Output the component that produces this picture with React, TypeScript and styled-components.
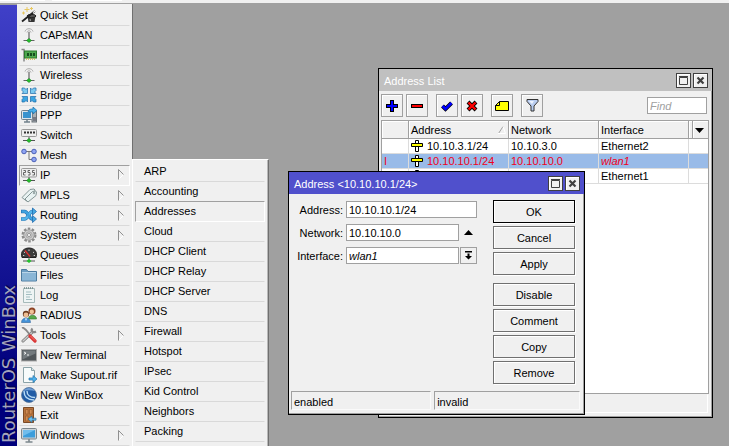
import React from "react";
import styled, { createGlobalStyle } from "styled-components";

const GlobalStyle = createGlobalStyle`
  *, *::before, *::after { box-sizing: border-box; }
  body {
    margin: 0;
    overflow: hidden;
    font: 11px/14px "Liberation Sans", Arial, sans-serif;
    color: #000;
  }
  button, input { font: inherit; color: inherit; border-radius: 0; margin: 0; }
`;

const Screen = styled.div`
  position: relative;
  display: flex;
  flex-direction: column;
  height: 100vh;
  overflow: hidden;
  background: #a0a0a0;
`;

const TopStrip = styled.div`
  flex: none;
  display: flex;
  height: 4px;
  background: #f0f0f0;
  border-bottom: 1px solid #a0a0a0;
`;

const StripSegment = styled.div<{ $w: number; $gap: number }>`
  width: ${p => p.$w}px;
  height: 1px;
  margin-right: ${p => p.$gap}px;
  background: #fff;
`;

const Workspace = styled.div`
  flex: 1;
  display: flex;
  align-items: stretch;
  min-height: 0;
`;

const Brand = styled.div`
  flex: none;
  width: 17px;
  display: flex;
  align-items: center;
  writing-mode: vertical-rl;
  transform: rotate(180deg);
  margin-top: 1px;
  padding-top: 3px;
  background: linear-gradient(to top, #4040c8, #00007c 85%);
  color: #a3a3bd;
  font: 18px/17px "DejaVu Sans", sans-serif;
  white-space: nowrap;
  text-shadow: 1px 1px 1px #000040;
`;

const MainMenu = styled.nav`
  flex: none;
  width: 116px;
  padding: 2px 2px 0 2px;
  background: #f0f0f0;
  border-right: 1px solid #707070;
  overflow: hidden;
`;

const SubMenu = styled.nav`
  position: absolute;
  left: 132px;
  top: 159px;
  bottom: 0;
  width: 137px;
  padding: 2px 3px 0 2px;
  background: #f0f0f0;
  border: 1px solid #fff;
  border-right: 1px solid #707070;
  border-bottom: 0;
  box-shadow: inset -1px 0 #b8b8b8;
`;

const MenuItem = styled.button<{ $active?: boolean; $plain?: boolean }>`
  display: flex;
  align-items: center;
  gap: 3px;
  width: 100%;
  height: ${p => (p.$active ? 21 : 20)}px;
  margin-top: ${p => (p.$active ? -1 : 0)}px;
  padding: 0 4px 2px ${p => (p.$plain ? 8 : 1)}px;
  text-align: left;
  white-space: nowrap;
  background: none;
  border: 1px solid transparent;
  border-bottom-color: #d9d9d9;
  ${p => p.$active && "border-color: #a0a0a0 #fff #fff #a0a0a0;"}
`;

const ItemText = styled.span`
  flex: 1;
`;

const Window = styled.section<{ $x: number; $y: number; $w: number; $h: number }>`
  position: absolute;
  left: ${p => p.$x}px;
  top: ${p => p.$y}px;
  width: ${p => p.$w}px;
  height: ${p => p.$h}px;
  display: flex;
  flex-direction: column;
  background: #f0f0f0;
  border: 1px solid #000;
  box-shadow: inset -1px -1px #a0a0a0;
`;

const TitleBar = styled.header<{ $active?: boolean }>`
  flex: none;
  display: flex;
  align-items: center;
  gap: 2px;
  height: 22px;
  padding: 0 4px 0 5px;
  color: #fff;
  background: ${p => (p.$active ? "#5050cc" : "#c0c0c0")};
`;

const Title = styled.h2`
  flex: 1;
  margin: 0;
  padding-top: 2px;
  font: inherit;
`;

const FrameButton = styled.button`
  display: grid;
  place-items: center;
  width: 15px;
  height: 15px;
  padding: 0;
  background: #f0f0f0;
  border: 1px solid #404040;
  box-shadow: inset 1px 1px #fff;
`;

const Toolbar = styled.div`
  display: flex;
  align-items: center;
  gap: 8px;
  padding: 3px 5px 3px 2px;
`;

const ToolGroup = styled.div`
  display: flex;
  gap: 3px;
`;

const ToolButton = styled.button`
  display: grid;
  place-items: center;
  width: 22px;
  height: 23px;
  padding: 0;
  background: #f0f0f0;
  border: 1px solid #a0a0a0;
  box-shadow: inset 1px 1px #fff;
`;

const TextInput = styled.input`
  flex: 1;
  min-width: 0;
  height: 17px;
  padding: 0 2px;
  background: #fff;
  border: 1px solid #a0a0a0;
  outline: none;
`;

const FindInput = styled(TextInput)`
  flex: none;
  width: 60px;
  margin-left: auto;
  font-style: italic;
  &::placeholder { color: #a0a0a0; opacity: 1; }
`;

const ItalicInput = styled(TextInput)`
  font-style: italic;
`;

const ListPane = styled.div`
  flex: 1;
  min-height: 0;
  margin: 0 3px 0 2px;
  overflow: hidden;
  background: #fff;
  border: 1px solid #a0a0a0;
`;

const Table = styled.table`
  width: 100%;
  table-layout: fixed;
  border-collapse: separate;
  border-spacing: 0;
`;

const Col = styled.col<{ $w?: number }>`
  width: ${p => (p.$w ? p.$w + "px" : "auto")};
`;

const HeadCell = styled.th`
  height: 18px;
  padding: 1px 2px 0;
  font-weight: normal;
  text-align: left;
  background: #f0f0f0;
  border-right: 1px solid #a0a0a0;
  border-bottom: 1px solid #a0a0a0;
  box-shadow: inset 1px 1px #fff;
  &:last-child { border-right: 0; }
`;

const HeadInner = styled.div`
  display: flex;
  align-items: center;
  justify-content: space-between;
`;

const Row = styled.tr<{ $selected?: boolean }>`
  background: ${p => (p.$selected ? "#99bbe8" : "#fff")};
  color: ${p => (p.$selected ? "#f00020" : "#000")};
`;

const Cell = styled.td`
  height: 15px;
  padding: 0 2px;
  line-height: 14px;
  white-space: nowrap;
  overflow: hidden;
  border-right: 1px solid #dcdcdc;
  border-bottom: 1px solid #dcdcdc;
  &:last-child { border-right: 0; }
`;

const CellInner = styled.div`
  display: flex;
  align-items: center;
  gap: 4px;
  height: 14px;
`;

const StatusBar = styled.footer`
  flex: none;
  display: flex;
  gap: 3px;
  height: 23px;
  padding: 0 4px 4px 2px;
`;

const StatusCell = styled.div<{ $grow: number }>`
  flex: ${p => p.$grow} 1 0;
  padding: 3px 2px 0;
  border: 1px solid;
  border-color: #a0a0a0 #fafafa #fafafa #a0a0a0;
`;

const PlainStatus = styled.div`
  flex: 1;
  border: 1px solid;
  border-color: transparent #fff #fff transparent;
`;

const DialogBody = styled.form`
  flex: 1;
  display: flex;
  gap: 16px;
  padding: 6px 9px 0 5px;
`;

const Fields = styled.div`
  flex: 1;
  min-width: 0;
  display: flex;
  flex-direction: column;
  gap: 6px;
  padding-top: 1px;
`;

const Field = styled.div`
  display: flex;
  align-items: center;
  height: 17px;
`;

const Label = styled.label`
  flex: none;
  width: 49px;
  margin-right: 3px;
  text-align: right;
`;

const DropButton = styled.button`
  flex: none;
  display: grid;
  place-items: center;
  width: 17px;
  height: 17px;
  margin-left: 1px;
  padding: 0;
  background: #f0f0f0;
  border: 1px solid #a0a0a0;
`;

const ArrowButton = styled(DropButton)`
  background: none;
  border: 0;
`;

const Actions = styled.div`
  flex: none;
  display: flex;
  flex-direction: column;
  gap: 3px;
  width: 82px;
`;

const ActionGroup = styled.div`
  display: flex;
  flex-direction: column;
  gap: 3px;
  & + & { margin-top: 5px; }
`;

const ActionButton = styled.button<{ $primary?: boolean }>`
  height: 23px;
  padding: 1px 0 0;
  background: #f0f0f0;
  border: 1px solid ${p => (p.$primary ? "#000" : "#707070")};
  box-shadow: inset 1px 1px #fff, 1px 1px #fff;
`;

const Svg = styled.svg`
  display: block;
  flex: none;
`;

const Icon = ({ children, size = 16 }: { children: React.ReactNode; size?: number }) => (
  <Svg width={size} height={size} viewBox={`0 0 ${size} ${size}`} aria-hidden="true">
    {children}
  </Svg>
);

const antenna = (
  <>
    <path d="M4 4.500C5 .8 11 .8 12 4.500M6 5.500C6.500 3.300 9.500 3.300 10 5.500" fill="none" stroke="#aaa" />
    <path d="M8 5v7" stroke="#888" strokeWidth="1.600" />
    <path d="M2.500 13.500h11" stroke="#666" />
    <path d="M8 11.500l2.500 2-2.500 2-2.500-2z" fill="#22c32a" stroke="#16791b" strokeWidth=".6" />
  </>
);

const port = (
  <>
    <path d="M8 10v3M2 13.500h12" stroke="#555" />
    <path d="M8 11.500l2.500 2-2.500 2-2.500-2z" fill="#22c32a" stroke="#16791b" strokeWidth=".6" />
  </>
);

const icons: Record<string, React.ReactNode> = {
  wand: (
    <>
      <path d="M6.500 9h8l-1 6h-6z" fill="#333" />
      <ellipse cx="10.500" cy="9" rx="4.500" ry="1.600" fill="#555" stroke="#222" />
      <path d="M1 14.500l13-10.500" stroke="#222" strokeWidth="1.800" />
      <path d="M12 5.600L14.300 3.700" stroke="#fff" strokeWidth="1.200" />
      <path d="M9 12l.5 2" stroke="#999" strokeWidth="1.300" />
      <path d="M6 0v5M3.500 2.500h5M2.500 4.500v3M1 6h3M10.500 0v3M9 1.500h3" stroke="#e8c860" />
    </>
  ),
  antenna,
  card: (
    <>
      <path d="M.5 2.500h2.500v12" fill="none" stroke="#888" strokeWidth="1.500" />
      <rect x="3.500" y="4" width="12" height="7" fill="#4fa84f" stroke="#2c7a2c" />
      <path d="M6 6h2v3H6zM9 6h2v3H9zM12 6h2v3h-2z" fill="#174d1d" />
      <path d="M5 12h9" stroke="#c8b343" strokeWidth="1.500" strokeDasharray="1 1" />
    </>
  ),
  bridge: (
    <g fill="#39a5e2" stroke="#1e6aa8" strokeWidth=".7">
      <path d="M1 1h2.500l1.500 1.500 1.500-1.500v5.500H1l1.500-1.500L1 3.500z" fill="#7ac9f0" />
      <path d="M15 1h-2.500L11 2.500 9.500 1v5.500H15l-1.500-1.500L15 3.500z" fill="#7ac9f0" />
      <path d="M1 15h2.500L5 13.500 6.500 15V9.500H1L2.500 11 1 12.500z" />
      <path d="M15 15h-2.500L11 13.500 9.500 15V9.500H15L13.500 11l1.500 1.500z" />
    </g>
  ),
  ppp: (
    <>
      <rect x="11" y="4" width="4.500" height="11" fill="#aab0b5" stroke="#6b7278" />
      <path d="M12 11h3M12 13h3" stroke="#445" />
      <rect x=".5" y="3.500" width="11" height="9" rx="1" fill="#dde5ea" stroke="#71818c" />
      <path d="M2 5h8v6H2z" fill="#3993ce" />
      <path d="M3 15h6M6 12v3" stroke="#71818c" strokeWidth="1.500" />
      <path d="M7 4.500C8 2 10 2 12 2V0l4 3.500L12 7V5C10 5 9 5 7 4.500z" fill="#48b0ea" stroke="#176dab" strokeWidth=".7" />
    </>
  ),
  switch: (
    <>
      <rect x=".5" y="2.500" width="15" height="7" rx="1" fill="#eee" stroke="#999" />
      <path d="M3 5.500h11" stroke="#333" strokeWidth="2" strokeDasharray="2 1" />
      {port}
    </>
  ),
  mesh: (
    <>
      <path d="M5 4.500h6M8 4.500v8h3" fill="none" stroke="#777" />
      <g fill="#8ea3f2" stroke="#3f56b0" strokeWidth=".9">
        <circle cx="3" cy="4.500" r="2.300" />
        <circle cx="13" cy="4.500" r="2.300" />
        <circle cx="13" cy="12.500" r="2.300" />
      </g>
    </>
  ),
  ip: (
    <>
      <rect x=".5" y="1.500" width="15" height="8.500" rx="1" fill="#eee" stroke="#999" />
      <path d="M2.500 3.500h2v2h-2v2.500h2M9 3.500H7v2h2v2.500H7M13.500 3.500h-2v2h2v2.500h-2" fill="none" stroke="#555" strokeWidth=".9" />
      {port}
    </>
  ),
  tag: (
    <g fill="#e9f2f2" stroke="#7a8c8c" strokeWidth=".9">
      <path d="M1 10.500L9 2.500l4-.5 1 1-1 4-7.500 7z" />
      <path d="M4 12L11.500 4.500l3-.5 1 1-.5 3.500L7 15z" />
      <circle cx="13" cy="6" r=".8" fill="#fff" />
    </g>
  ),
  routing: (
    <>
      <path d="M0 4.500h3.500c4 0 4 7.500 8 7.500h1" fill="none" stroke="#1f6bae" strokeWidth="3.600" />
      <path d="M0 12h3.500c4 0 4-7.500 8-7.500h1" fill="none" stroke="#2479b9" strokeWidth="3.600" />
      <path d="M.5 12h3c4 0 4-7.500 8-7.500h1" fill="none" stroke="#55b5ea" strokeWidth="2.400" />
      <path d="M.5 4.500h3c4 0 4 7.500 8 7.500h1" fill="none" stroke="#3fa2de" strokeWidth="2.400" />
      <path d="M11.500 1l4 3.500-4 3.500zM11.500 8.500l4 3.500-4 3.500z" fill="#46a9e2" stroke="#1f6bae" strokeWidth=".8" />
    </>
  ),
  gear: (
    <>
      <circle cx="8" cy="8" r="6" fill="none" stroke="#8b8b8b" strokeWidth="3" strokeDasharray="2.400 1.370" />
      <circle cx="8" cy="8" r="5.200" fill="#cfcfcf" stroke="#9d9d9d" />
      <circle cx="8" cy="8" r="3.200" fill="none" stroke="#a9a9a9" />
      <circle cx="8" cy="8" r="1.600" fill="#f4f4f4" stroke="#888" strokeWidth=".8" />
    </>
  ),
  gauge: (
    <>
      <path d="M1 10.500C-1 4 3.500 1 8 1s9 3 7 9.500z" fill="#3c3c3c" stroke="#222" />
      <path d="M3 5l1 .8M8 2.500V4M13 5l-1 .8M2 8.500h1.300M14 8.500h-1.300" stroke="#ccc" />
      <path d="M4 3.500l5 6" stroke="#e33030" strokeWidth="1.300" />
      <path d="M8 10v3M2 14h12" stroke="#555" />
      <path d="M8 12l2.500 2L8 16l-2.500-2z" fill="#22c32a" />
    </>
  ),
  folder: (
    <>
      <path d="M.5 14V2.500h5l1.500 2h8.500V14z" fill="#6c9dc2" stroke="#4d7b9f" />
      <path d="M1 6h14v7.500H1z" fill="#8bb6d6" />
      <path d="M1 5.500h14" stroke="#b8d4e8" />
    </>
  ),
  log: (
    <>
      <path d="M2.500 1.500h11v14h-11z" fill="#eef4f4" stroke="#9db3b3" strokeWidth=".9" />
      <path d="M3 1h10" stroke="#6d8585" strokeWidth="1.500" strokeDasharray="1 1" />
      <path d="M5 5h5M5 7.500h6M5 10h4M5 12.500h6" stroke="#a2bcc0" />
    </>
  ),
  users: (
    <>
      <circle cx="11" cy="4" r="3.500" fill="#8d4324" />
      <circle cx="10.800" cy="4.800" r="2.200" fill="#f1c39b" />
      <path d="M7.500 12c0-5 8-5 8 0z" fill="#56a94c" stroke="#34742e" strokeWidth=".6" />
      <circle cx="5" cy="7" r="3.200" fill="#6b3c22" />
      <circle cx="5" cy="8" r="2.400" fill="#efbd92" />
      <path d="M.5 15.500c0-6 9-6 9 0z" fill="#4392d8" stroke="#28619b" strokeWidth=".6" />
      <path d="M4 11.500h2L5 14z" fill="#fff" />
    </>
  ),
  tools: (
    <>
      <path d="M2 14L11.500 5" stroke="#777" strokeWidth="3" strokeLinecap="round" />
      <path d="M2 14L11.500 5" stroke="#ccc" strokeWidth="1.500" strokeLinecap="round" />
      <path d="M11.500 1.500c-2 2 0 5 3.500 3" fill="none" stroke="#888" strokeWidth="2.200" />
      <path d="M1 1l1-.5 3 2.500 4.500 5.500" fill="none" stroke="#888" strokeWidth="1.800" />
      <path d="M9 9l5 5" stroke="#d93636" strokeWidth="3.200" strokeLinecap="round" />
      <path d="M9.500 9l4.500 4.500" stroke="#ff8a80" strokeWidth=".8" />
    </>
  ),
  terminal: (
    <>
      <rect x=".5" y="2.500" width="15" height="11.500" fill="#50565a" stroke="#aaa" />
      <path d="M1.500 3.500h13v3l-13 6z" fill="#737a7e" />
      <path d="M3 5l2 1.200L3 7.400M6 8h2" fill="none" stroke="#fff" strokeWidth=".9" />
    </>
  ),
  supout: (
    <>
      <path d="M2.500.5h8l3 3v12h-11z" fill="#f7fbfb" stroke="#8ba3a8" />
      <path d="M10.500.5v3h3" fill="#d6e3e6" stroke="#8ba3a8" />
      <path d="M8 11h4V8.500l4 3.500-4 3.500V13H8z" fill="#4eb2ec" stroke="#2373ae" strokeWidth=".7" />
    </>
  ),
  winbox: (
    <>
      <circle cx="8" cy="8" r="7.500" fill="#205ba5" stroke="#5b7799" strokeWidth=".8" />
      <path d="M2 4c3-4 9-4 12 0-4-1-8-1-12 0z" fill="#6f9dd2" />
      <path d="M3 4c0 6 4 9 10 9M6 4c0 4 3 6.500 8 6.500" fill="none" stroke="#b8dcf6" strokeWidth="1.400" />
    </>
  ),
  exit: (
    <>
      <path d="M2.500 .5h10v15h-10z" fill="#b8733c" stroke="#7a4a26" />
      <path d="M4.500 2.500h2.500v4.500H4.500zM8.500 2.500h2.500v4.500H8.500zM4.500 9h2.500v5H4.500z" fill="#cf8c54" stroke="#8d5529" strokeWidth=".6" />
      <path d="M15 11.200h-4V9L7 12l4 3.500v-2.300h4z" fill="#6cc1ef" stroke="#24679a" strokeWidth=".7" />
    </>
  ),
  monitor: (
    <>
      <rect x=".5" y="1.500" width="15" height="10.500" rx="1" fill="#cbd2d6" stroke="#7b868c" />
      <path d="M2 3h12v7.500H2z" fill="#3c9ddb" />
      <path d="M2 3h12L2 9z" fill="#70bdec" />
      <path d="M8 12v2.500M4.500 15h7" stroke="#7b868c" strokeWidth="1.600" />
    </>
  ),
};

const MenuArrow = () => (
  <Svg width="7" height="11" viewBox="0 0 7 11" aria-hidden="true">
    <path d="M1 10L5.500 5.500" stroke="#fff" fill="none" />
    <path d="M.5 10.500V.5L5.500 5.500" stroke="#909090" fill="none" />
  </Svg>
);

const mainItems: [string, string, boolean?][] = [
  ["Quick Set", "wand"],
  ["CAPsMAN", "antenna"],
  ["Interfaces", "card"],
  ["Wireless", "antenna"],
  ["Bridge", "bridge"],
  ["PPP", "ppp"],
  ["Switch", "switch"],
  ["Mesh", "mesh"],
  ["IP", "ip", true],
  ["MPLS", "tag", true],
  ["Routing", "routing", true],
  ["System", "gear", true],
  ["Queues", "gauge"],
  ["Files", "folder"],
  ["Log", "log"],
  ["RADIUS", "users"],
  ["Tools", "tools", true],
  ["New Terminal", "terminal"],
  ["Make Supout.rif", "supout"],
  ["New WinBox", "winbox"],
  ["Exit", "exit"],
  ["Windows", "monitor", true],
];

const ipItems = [
  "ARP", "Accounting", "Addresses", "Cloud", "DHCP Client", "DHCP Relay", "DHCP Server",
  "DNS", "Firewall", "Hotspot", "IPsec", "Kid Control", "Neighbors", "Packing",
];

const addresses = [
  { flag: "", address: "10.10.3.1/24", network: "10.10.3.0", iface: "Ethernet2" },
  { flag: "I", address: "10.10.10.1/24", network: "10.10.10.0", iface: "wlan1" },
  { flag: "", address: "192.168.100.1", network: "192.168.100.0", iface: "Ethernet1" },
];

const AddressIcon = () => (
  <Icon size={12}>
    <path d="M4.500.5h3v11h-3z" fill="#fff" stroke="#000" />
    <path d="M.5 3.500h11v3H.5z" fill="#ff0" stroke="#000" />
  </Icon>
);

const WindowControls = () => (
  <>
    <FrameButton type="button" aria-label="Maximize">
      <Icon size={9}>
        <path d="M.5 1.500h8v7h-8zM0 .5h9" fill="none" stroke="#404040" />
      </Icon>
    </FrameButton>
    <FrameButton type="button" aria-label="Close">
      <Icon size={9}>
        <path d="M1.500 1.500l6 6M7.500 1.500l-6 6" stroke="#404040" strokeWidth="2.200" />
      </Icon>
    </FrameButton>
  </>
);

const AddressList = () => (
  <Window $x={378} $y={68} $w={335} $h={350}>
    <TitleBar>
      <Title>Address List</Title>
      <WindowControls />
    </TitleBar>
    <Toolbar>
      <ToolGroup>
        <ToolButton aria-label="Add">
          <Icon size={12}>
            <path d="M4 0h4v4h4v4H8v4H4V8H0V4h4z" />
            <path d="M5 1h2v4h4v2H7v4H5V7H1V5h4z" fill="#00f" />
          </Icon>
        </ToolButton>
        <ToolButton aria-label="Remove">
          <Icon size={12}>
            <path d="M0 4h12v4H0z" />
            <path d="M1 5h10v2H1z" fill="#f00" />
          </Icon>
        </ToolButton>
      </ToolGroup>
      <ToolGroup>
        <ToolButton aria-label="Enable">
          <Icon size={12}>
            <path d="M1.500 6l3 3L10.500 3" fill="none" stroke="#000" strokeWidth="4" />
            <path d="M1.500 6l3 3L10.500 3" fill="none" stroke="#00f" strokeWidth="2.600" />
          </Icon>
        </ToolButton>
        <ToolButton aria-label="Disable">
          <Icon size={12}>
            <path d="M2 2l8 8M10 2l-8 8" stroke="#000" strokeWidth="4" />
            <path d="M2.500 2.500l7 7M9.500 2.500l-7 7" stroke="#f00" strokeWidth="2.400" />
          </Icon>
        </ToolButton>
      </ToolGroup>
      <ToolButton aria-label="Comment">
        <Icon size={14}>
          <path d="M4.500 2.500h9v9H.5v-5z" fill="#ff0" stroke="#000" />
          <path d="M4.500 2.500v4h-4" fill="none" stroke="#000" />
        </Icon>
      </ToolButton>
      <ToolButton aria-label="Filter">
        <Icon size={13}>
          <path d="M1 .5h11v2l-4 4.500v5H5V7L1 2.500z" fill="#b9cdf0" stroke="#333" />
          <path d="M3 2h5L6 5z" fill="#edf4ff" />
        </Icon>
      </ToolButton>
      <FindInput placeholder="Find" aria-label="Find" />
    </Toolbar>
    <ListPane>
      <Table>
        <colgroup>
          <Col $w={27} />
          <Col $w={100} />
          <Col $w={90} />
          <Col $w={90} />
          <Col $w={4} />
          <Col />
        </colgroup>
        <thead>
          <tr>
            <HeadCell />
            <HeadCell>
              <HeadInner>
                Address
                <Icon size={8}>
                  <path d="M.5 7.500L5 .5" stroke="#a0a0a0" />
                  <path d="M5 .5l2.500 7H0" fill="none" stroke="#fff" />
                </Icon>
              </HeadInner>
            </HeadCell>
            <HeadCell>Network</HeadCell>
            <HeadCell>Interface</HeadCell>
            <HeadCell />
            <HeadCell>
              <Icon size={9}>
                <path d="M0 2h9L4.500 7z" />
              </Icon>
            </HeadCell>
          </tr>
        </thead>
        <tbody>
          {addresses.map(a => (
            <Row key={a.address} $selected={a.flag === "I"}>
              <Cell>{a.flag}</Cell>
              <Cell>
                <CellInner>
                  <AddressIcon />
                  {a.address}
                </CellInner>
              </Cell>
              <Cell>{a.network}</Cell>
              <Cell>{a.iface === "wlan1" ? <i>{a.iface}</i> : a.iface}</Cell>
              <Cell colSpan={2} />
            </Row>
          ))}
        </tbody>
      </Table>
    </ListPane>
    <StatusBar>
      <PlainStatus />
    </StatusBar>
  </Window>
);

const AddressDialog = () => (
  <Window $x={288} $y={171} $w={297} $h={244}>
    <TitleBar $active>
      <Title>Address &lt;10.10.10.1/24&gt;</Title>
      <WindowControls />
    </TitleBar>
    <DialogBody onSubmit={e => e.preventDefault()}>
      <Fields>
        <Field>
          <Label htmlFor="address">Address:</Label>
          <TextInput id="address" defaultValue="10.10.10.1/24" />
        </Field>
        <Field>
          <Label htmlFor="network">Network:</Label>
          <TextInput id="network" defaultValue="10.10.10.0" />
          <ArrowButton type="button" aria-label="Hide network">
            <Icon size={9}>
              <path d="M0 7h9L4.500 2z" />
            </Icon>
          </ArrowButton>
        </Field>
        <Field>
          <Label htmlFor="interface">Interface:</Label>
          <ItalicInput id="interface" defaultValue="wlan1" />
          <DropButton type="button" aria-label="Choose interface">
            <Icon size={9}>
              <path d="M1 0h7v1.500H1zM3.500 2.500h2V5H8L4.500 8.500 1 5h2.500z" />
            </Icon>
          </DropButton>
        </Field>
      </Fields>
      <Actions>
        <ActionGroup>
          <ActionButton $primary>OK</ActionButton>
          <ActionButton type="button">Cancel</ActionButton>
          <ActionButton type="button">Apply</ActionButton>
        </ActionGroup>
        <ActionGroup>
          <ActionButton type="button">Disable</ActionButton>
          <ActionButton type="button">Comment</ActionButton>
          <ActionButton type="button">Copy</ActionButton>
          <ActionButton type="button">Remove</ActionButton>
        </ActionGroup>
      </Actions>
    </DialogBody>
    <StatusBar>
      <StatusCell $grow={140}>enabled</StatusCell>
      <StatusCell $grow={146}>invalid</StatusCell>
    </StatusBar>
  </Window>
);

export default function App() {
  return (
    <Screen>
      <GlobalStyle />
      <TopStrip>
        <StripSegment $w={19} $gap={3} />
        <StripSegment $w={23} $gap={7} />
        <StripSegment $w={70} $gap={0} />
      </TopStrip>
      <Workspace>
        <Brand>RouterOS WinBox</Brand>
        <MainMenu>
          {mainItems.map(([label, icon, sub]) => (
            <MenuItem key={label} $active={label === "IP"}>
              <Icon>{icons[icon]}</Icon>
              <ItemText>{label}</ItemText>
              {sub && <MenuArrow />}
            </MenuItem>
          ))}
        </MainMenu>
      </Workspace>
      <SubMenu>
        {ipItems.map(label => (
          <MenuItem key={label} $plain $active={label === "Addresses"}>
            <ItemText>{label}</ItemText>
          </MenuItem>
        ))}
      </SubMenu>
      <AddressList />
      <AddressDialog />
    </Screen>
  );
}
